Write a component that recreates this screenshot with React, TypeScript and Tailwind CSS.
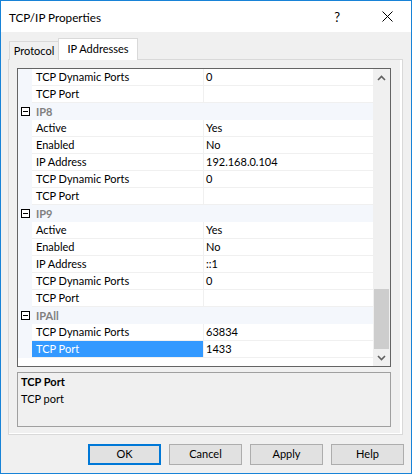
import React from "react";

type Row =
  | { kind: "cat"; label: string }
  | { kind: "prop"; name: string; value: string; selected?: boolean };

const rows: Row[] = [
  { kind: "prop", name: "TCP Dynamic Ports", value: "0" },
  { kind: "prop", name: "TCP Port", value: "" },
  { kind: "cat", label: "IP8" },
  { kind: "prop", name: "Active", value: "Yes" },
  { kind: "prop", name: "Enabled", value: "No" },
  { kind: "prop", name: "IP Address", value: "192.168.0.104" },
  { kind: "prop", name: "TCP Dynamic Ports", value: "0" },
  { kind: "prop", name: "TCP Port", value: "" },
  { kind: "cat", label: "IP9" },
  { kind: "prop", name: "Active", value: "Yes" },
  { kind: "prop", name: "Enabled", value: "No" },
  { kind: "prop", name: "IP Address", value: "::1" },
  { kind: "prop", name: "TCP Dynamic Ports", value: "0" },
  { kind: "prop", name: "TCP Port", value: "" },
  { kind: "cat", label: "IPAll" },
  { kind: "prop", name: "TCP Dynamic Ports", value: "63834" },
  { kind: "prop", name: "TCP Port", value: "1433", selected: true },
];

function MinusBox() {
  return (
    <svg width="9" height="9" viewBox="0 0 9 9" className="block">
      <rect x="0.5" y="0.5" width="8" height="8" fill="white" stroke="#000" strokeWidth="1" />
      <line x1="2" y1="4.5" x2="7" y2="4.5" stroke="#000" strokeWidth="1" />
    </svg>
  );
}

function GridRow({ row }: { row: Row }) {
  if (row.kind === "cat") {
    return (
      <div className="h-[17px] flex items-center bg-[#f4f7fc]">
        <div className="w-[14px] h-full flex items-center justify-center pl-[1px]">
          <MinusBox />
        </div>
        <span className="pl-[4px] font-bold text-[#808080] leading-[16px]">{row.label}</span>
      </div>
    );
  }
  return (
    <div className="h-[17px] flex">
      <div className="w-[14px] h-full bg-[#f4f7fc]" />
      <div
        className={
          row.selected
            ? "w-[172px] h-full border-r border-b border-[#f0f0f0] bg-[#3399ff] text-white pl-[4px] leading-[15px] whitespace-nowrap"
            : "w-[172px] h-full border-r border-b border-[#f0f0f0] pl-[4px] leading-[15px] whitespace-nowrap"
        }
      >
        {row.name}
      </div>
      <div className="flex-1 h-full border-b border-[#f0f0f0] pl-[2px] leading-[15px] whitespace-nowrap">
        {row.value}
      </div>
    </div>
  );
}

function Chevron({ up }: { up?: boolean }) {
  return (
    <svg width="9" height="6" viewBox="0 0 9 6" className="block">
      <path
        d={up ? "M1 5 L4.5 1.5 L8 5" : "M1 1 L4.5 4.5 L8 1"}
        fill="none"
        stroke="#606060"
        strokeWidth="1.6"
      />
    </svg>
  );
}

function Button({ label, primary }: { label: string; primary?: boolean }) {
  return (
    <div
      className={
        primary
          ? "w-[73px] h-[21px] border-2 border-[#0078d7] bg-[#e1e1e1] flex items-center justify-center text-black"
          : "w-[73px] h-[21px] border border-[#adadad] bg-[#e1e1e1] flex items-center justify-center text-black"
      }
    >
      {label}
    </div>
  );
}

export default function App() {
  return (
    <div className="w-[416px] h-[476px] bg-white font-['Lato',sans-serif] text-[11px] text-black">
      <div className="w-[412px] h-[474px] border border-[#1883d7] bg-[#f0f0f0] flex flex-col">
        {/* Title bar */}
        <div className="h-[31px] bg-white flex items-center pl-[8px] shrink-0">
          <span className="text-[11.7px] leading-[16px]">TCP/IP Properties</span>
          <div className="flex-1" />
          <span className="text-[13px] leading-[16px] mr-[42px]">?</span>
          <svg width="11" height="11" viewBox="0 0 11 11" className="mr-[18px]">
            <line x1="0.5" y1="0.5" x2="10.5" y2="10.5" stroke="#000" strokeWidth="1" />
            <line x1="10.5" y1="0.5" x2="0.5" y2="10.5" stroke="#000" strokeWidth="1" />
          </svg>
        </div>

        {/* Tabs + panel */}
        <div className="pl-[7px] pr-[8px] pt-[6px] flex flex-col">
          <div className="flex items-end h-[22px] -mb-px relative z-10 pl-[1px]">
            <div className="h-[19px] w-[50px] border border-b-0 border-[#d9d9d9] bg-[#f0f0f0] flex items-center justify-center leading-[16px] whitespace-nowrap">
              Protocol
            </div>
            <div className="h-[22px] w-[80px] border border-b-0 border-[#d9d9d9] bg-white flex items-center justify-center leading-[16px] -ml-px pb-[2px] whitespace-nowrap">
              IP Addresses
            </div>
          </div>
          <div className="h-[376px] border border-[#d9d9d9] bg-[#f0f0f0]">
            <div className="h-full border-r-2 border-b border-white pl-[8px] pr-[9px] pt-[8px] flex flex-col">
              {/* Property grid */}
              <div className="h-[299px] border border-[#646464] bg-white flex">
                <div className="flex-1 flex flex-col">
                  {rows.map((r, i) => (
                    <GridRow key={i} row={r} />
                  ))}
                </div>
                <div className="w-[17px] bg-[#f0f0f0] flex flex-col items-center">
                  <div className="h-[17px] flex items-center justify-center">
                    <Chevron up />
                  </div>
                  <div className="h-[203px]" />
                  <div className="w-[15px] h-[60px] bg-[#cdcdcd]" />
                  <div className="flex-1" />
                  <div className="h-[17px] flex items-center justify-center">
                    <Chevron />
                  </div>
                </div>
              </div>
              {/* Description */}
              <div className="mt-[5px] h-[55px] border border-[#a0a0a0] bg-[#f0f0f0] pl-[3px] pt-[1px]">
                <div className="font-bold leading-[16px]">TCP Port</div>
                <div className="leading-[16px] mt-[1px]">TCP port</div>
              </div>
            </div>
          </div>
        </div>

        {/* Buttons */}
        <div className="mt-[9px] flex justify-end gap-[8px] pr-[7px]">
          <Button label="OK" primary />
          <Button label="Cancel" />
          <Button label="Apply" />
          <Button label="Help" />
        </div>
      </div>
    </div>
  );
}
